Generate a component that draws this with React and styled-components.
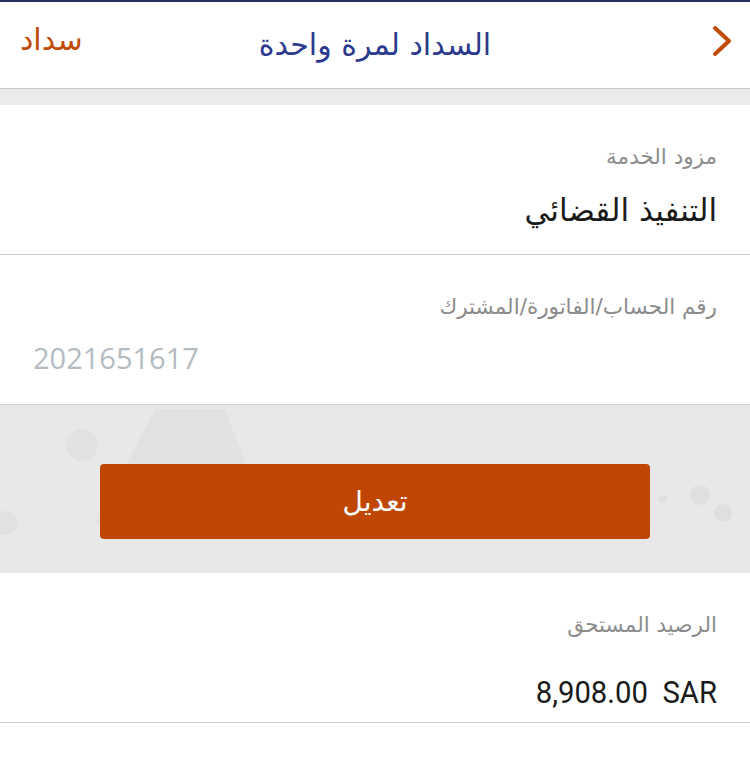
import React from 'react'
import styled, { createGlobalStyle } from 'styled-components'

const GlobalStyle = createGlobalStyle`
  html, body {
    margin: 0;
    padding: 0;
    background: #ffffff;
  }
  body {
    font-family: "DejaVu Sans", "Noto Sans", sans-serif;
  }
`

function App() {
  return (
    <Page>
      <GlobalStyle />
      <TopLine />
      <Header>
        <BackText>سداد</BackText>
        <Title>السداد لمرة واحدة</Title>
        <Chevron viewBox="0 0 24 32">
          <path d="M5 3 L19 16 L5 29" fill="none" stroke="#C04A06" strokeWidth="4" strokeLinecap="round" strokeLinejoin="round" />
        </Chevron>
      </Header>
      <Strip />

      <Field>
        <Label>مزود الخدمة</Label>
        <Value>التنفيذ القضائي</Value>
      </Field>

      <Field>
        <Label>رقم الحساب/الفاتورة/المشترك</Label>
        <Account>2021651617</Account>
      </Field>

      <ActionPanel>
        <Decor viewBox="0 0 750 168" preserveAspectRatio="none">
          <polygon points="95,120 155,4 225,4 270,120" fill="#dcdce0" opacity="0.45" />
          <circle cx="82" cy="40" r="16" fill="#dcdcdf" opacity="0.5" />
          <circle cx="6" cy="118" r="12" fill="#d9d9dc" opacity="0.5" />
          <circle cx="700" cy="90" r="10" fill="#d9d9dc" opacity="0.6" />
          <circle cx="723" cy="108" r="9" fill="#d9d9dc" opacity="0.6" />
          <circle cx="663" cy="94" r="4" fill="#d9d9dc" opacity="0.6" />
        </Decor>
        <EditButton>تعديل</EditButton>
      </ActionPanel>

      <Field>
        <Label>الرصيد المستحق</Label>
        <Amount>8,908.00&nbsp;&nbsp;SAR</Amount>
      </Field>
      <Rest />
    </Page>
  )
}

export default App

const Page = styled.div`
  width: 750px;
  min-height: 771px;
  background: #ffffff;
  overflow: hidden;
`

const TopLine = styled.div`
  height: 2px;
  background: #23305e;
`

const Header = styled.div`
  position: relative;
  height: 86px;
  display: flex;
  align-items: center;
  justify-content: center;
  border-bottom: 1px solid #c9c9c9;
`

const Title = styled.div`
  font-size: 30px;
  color: #2b3a8c;
  direction: rtl;
  margin-top: -2px;
`

const BackText = styled.div`
  position: absolute;
  left: 20px;
  top: 20px;
  font-size: 30px;
  color: #C04A06;
  direction: rtl;
`

const Chevron = styled.svg`
  position: absolute;
  right: 16px;
  top: 23px;
  width: 24px;
  height: 32px;
`

const Strip = styled.div`
  height: 16px;
  background: #ebebec;
`

const Field = styled.div`
  height: 149px;
  border-bottom: 1px solid #cfcfcf;
  padding: 0 33px;
  direction: rtl;
  display: flex;
  flex-direction: column;
`

const Label = styled.div`
  margin-top: 38px;
  font-size: 21.5px;
  color: #8c8c8c;
  line-height: 28px;
`

const Value = styled.div`
  margin-top: 20px;
  font-size: 31px;
  color: #1b1b1b;
  line-height: 38px;
`

const Account = styled.div`
  margin-top: 18px;
  font-family: "Open Sans", sans-serif;
  font-size: 29px;
  color: #b4bbc1;
  direction: ltr;
  text-align: left;
  line-height: 38px;
`

const Amount = styled.div`
  margin-top: 34px;
  font-family: Roboto, sans-serif;
  font-size: 32px;
  color: #1b1b1b;
  direction: ltr;
  text-align: right;
  line-height: 38px;
  transform: scaleX(0.915);
  transform-origin: right center;
`

const ActionPanel = styled.div`
  position: relative;
  height: 168px;
  background: #e8e8e9;
  display: flex;
  align-items: center;
  justify-content: center;
`

const Decor = styled.svg`
  position: absolute;
  inset: 0;
  width: 100%;
  height: 100%;
`

const EditButton = styled.div`
  position: relative;
  width: 550px;
  height: 75px;
  margin-top: 24px;
  border-radius: 4px;
  background: #C04703;
  color: #ffffff;
  font-size: 28px;
  display: flex;
  align-items: center;
  justify-content: center;
  direction: rtl;
`

const Rest = styled.div`
  height: 48px;
  background: #ffffff;
`
